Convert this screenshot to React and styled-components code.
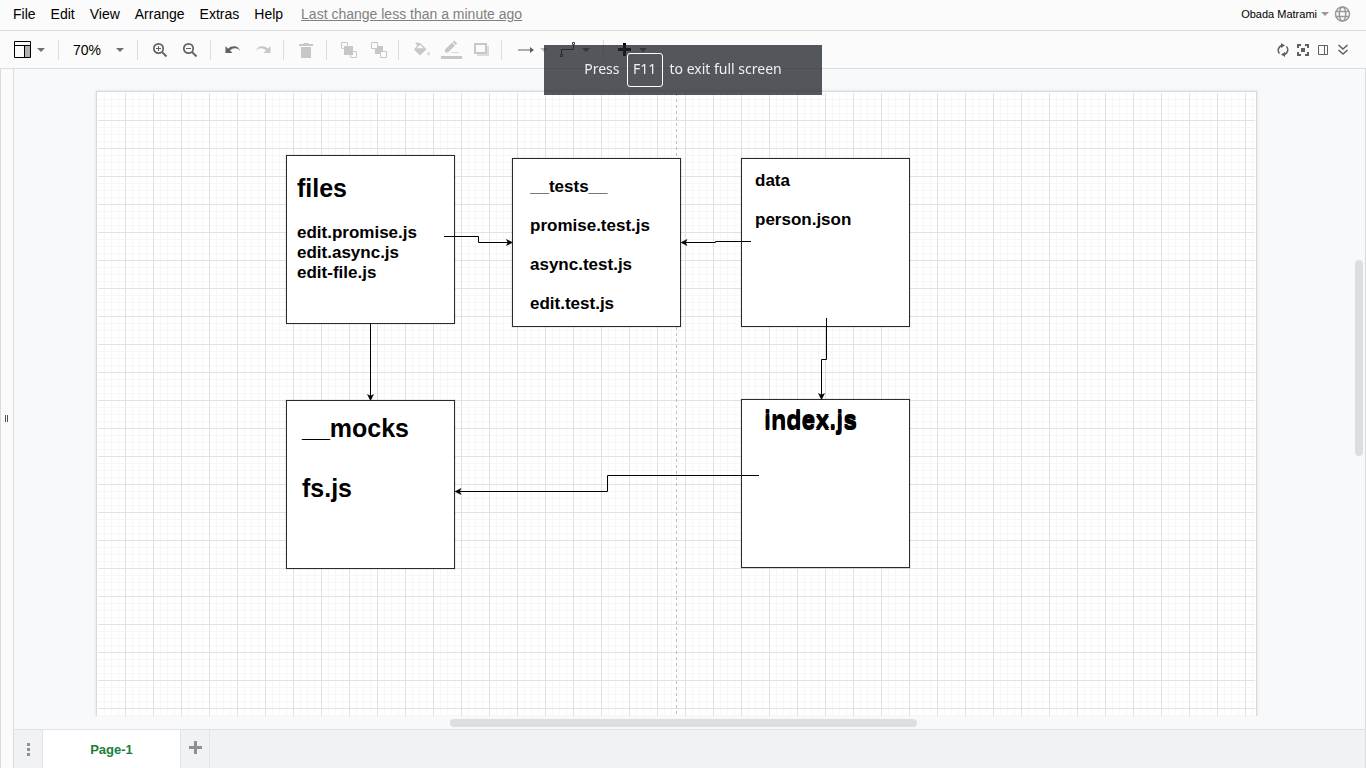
import React from 'react';
import styled, { createGlobalStyle } from 'styled-components';

const Global = createGlobalStyle`
  * { box-sizing: border-box; }
  body { margin: 0; font-family: "Liberation Sans", Arial, sans-serif; font-size: 14px; color: #000; background: #f8f9fb; }
  button { font: inherit; color: inherit; background: none; border: 0; padding: 0; margin: 0; cursor: pointer; }
  svg { display: block; }
`;

const Shell = styled.div`
  min-height: 100vh;
  display: flex;
  flex-direction: column;
`;

const MenuBar = styled.header`
  display: flex;
  align-items: center;
  height: 31px;
  padding: 0 15px 2px 13px;
  background: #fbfbfb;
  border-bottom: 1px solid #dadce0;
`;

const Menus = styled.nav`
  display: flex;
  gap: 15px;
  flex: 1;
  white-space: nowrap;
`;

const MenuButton = styled.button`
  line-height: 18px;
`;

const StatusLink = styled.a`
  color: #808080;
  margin-left: 3px;
  line-height: 18px;
`;

const Account = styled.div`
  display: flex;
  align-items: center;
  gap: 5px;
`;

const UserButton = styled.button`
  display: flex;
  align-items: center;
  gap: 4px;
  font-size: 11px;
  line-height: 18px;
`;

const Toolbar = styled.div`
  display: flex;
  align-items: center;
  height: 38px;
  padding: 0 15px 0 13px;
  background: #fbfbfb;
  border-bottom: 1px solid #dadce0;
`;

const Tool = styled.button`
  display: flex;
  align-items: center;
  justify-content: center;
  gap: ${(p) => p.$gap || 0}px;
  width: ${(p) => p.$w || 30}px;
  height: 24px;
  flex: none;
  color: ${(p) => (p.$dark ? '#000' : '#606060')};
  opacity: ${(p) => (p.$off ? 0.33 : 1)};
`;

const Divider = styled.span`
  width: 1px;
  height: 20px;
  flex: none;
  background: #dadce0;
  margin: 0 ${(p) => p.$r || 14}px 0 ${(p) => p.$l || 14}px;
`;

const Right = styled.div`
  display: flex;
  gap: 4px;
  margin-left: auto;
`;

const Work = styled.div`
  flex: 1;
  display: flex;
`;

const Rail = styled.aside`
  display: flex;
  align-items: center;
  justify-content: center;
  width: 14px;
  flex: none;
  background: #fbfbfb;
  border: solid #dadce0;
  border-width: 0 1px;
`;

const Editor = styled.main`
  flex: 1;
  min-width: 0;
  display: flex;
  flex-direction: column;
  border-right: 1px solid #dadce0;
`;

const View = styled.div`
  flex: 1;
  display: flex;
  padding: 22px 0 0 82px;
  overflow: hidden;
`;

const Paper = styled.section`
  flex: 1;
  min-width: 0;
  display: flex;
  margin-right: 98px;
  padding: 1px 1px 0;
  background: #fff;
  border: 1px solid #d8d9da;
  border-bottom: 0;
  box-shadow: 0 0 2px 1px #e9eaeb;
`;

const Grid = styled.div`
  position: relative;
  flex: 1;
  background-image:
    linear-gradient(#e2e2e2 1px, transparent 1px),
    linear-gradient(90deg, #e2e2e2 1px, transparent 1px),
    linear-gradient(#f7f7f7 1px, transparent 1px),
    linear-gradient(90deg, #f7f7f7 1px, transparent 1px);
  background-size: 28px 28px, 28px 28px, 7px 7px, 7px 7px;
  background-position: 27px 27px, 27px 27px, 6px 6px, 6px 6px;
`;

const Layer = styled.svg`
  position: absolute;
  inset: 0;
  width: 100%;
  height: 100%;
  pointer-events: none;
`;

const Node = styled.article`
  position: absolute;
  left: ${(p) => p.$x}px;
  top: ${(p) => p.$y}px;
  width: 169px;
  height: 169px;
  padding: ${(p) => p.$pad};
  background: #fff;
  border: 1px solid #2b2b2b;
  box-shadow: 0 0 1px rgba(0, 0, 0, 0.4);
  font-weight: bold;
`;

const Title = styled.h2`
  position: relative;
  margin: 0;
  font-size: 25px;
  line-height: 30px;
`;

const Ghost = styled.span`
  position: absolute;
  left: 0;
  top: 2px;
`;

const Lines = styled.div`
  margin-top: ${(p) => p.$mt || 0}px;
  font-size: 17px;
  line-height: ${(p) => p.$lh}px;
`;

const VTrack = styled.div`
  width: 10px;
  flex: none;
  padding: 169px 2px 0 0;
`;

const HTrack = styled.div`
  height: 13px;
  flex: none;
  padding: 3px 0 0 436px;
`;

const Thumb = styled.div`
  width: ${(p) => p.$w}px;
  height: ${(p) => p.$h}px;
  border-radius: 4px;
  background: #dddee0;
`;

const Tabs = styled.footer`
  display: flex;
  height: 39px;
  background: #f1f2f4;
  border-top: 1px solid #dfe1e4;
`;

const TabButton = styled.button`
  display: flex;
  align-items: center;
  justify-content: center;
  width: ${(p) => p.$w}px;
  border-right: 1px solid #e3e5e8;
  background: ${(p) => (p.$active ? '#fff' : 'transparent')};
  color: ${(p) => (p.$active ? '#188038' : '#909090')};
  font-size: 13px;
  font-weight: bold;
`;

const AddButton = styled(TabButton)`
  padding-bottom: 3px;
`;

const Toast = styled.div`
  position: fixed;
  top: 45px;
  left: 50%;
  transform: translateX(-50%);
  display: flex;
  align-items: center;
  justify-content: center;
  gap: 7px;
  width: 278px;
  height: 50px;
  background: rgba(32, 36, 41, 0.77);
  color: #f1f1f1;
  font-family: "Noto Sans", sans-serif;
  font-size: 14px;
  line-height: 18px;
  white-space: nowrap;
`;

const ToastText = styled.span`
  padding-bottom: 2px;
`;

const Key = styled.kbd`
  display: flex;
  align-items: center;
  justify-content: center;
  width: 36px;
  height: 34px;
  padding-bottom: 2px;
  border: 1px solid #fff;
  border-radius: 3px;
  font: inherit;
`;

const Caret = ({ color = '#707070' }) => (
  <svg width="8" height="4" viewBox="0 0 8 4" fill={color}><path d="M0 0h8L4 4z" /></svg>
);

const Svg = ({ w = 24, h = 24, children, ...rest }) => (
  <svg width={w} height={h} viewBox={`0 0 ${w} ${h}`} fill="currentColor" aria-hidden="true" {...rest}>{children}</svg>
);

const Magnifier = ({ plus }) => (
  <Svg w={16} h={16}>
    <circle cx="6.5" cy="6.5" r="4.7" fill="none" stroke="currentColor" strokeWidth="1.7" />
    <path d="M9.5 10.8l1.3-1.3 4.4 4.3-1.4 1.4z" />
    <path d={plus ? 'M4 6h2V4h1v2h2v1H7v2H6V7H4z' : 'M4 6h5v1H4z'} />
  </Svg>
);

const Undo = ({ flip }) => (
  <Svg w={16} h={10} transform={flip ? 'scale(-1 1)' : undefined}>
    <path d="M.5 1v7h7L5 5.600C6.500 4.100 8.200 3.200 10 3.300c2.300.1 4.200 1 5.500 3C14.200 3 12 1.200 9.200 1.200c-2.400 0-4.600.8-6.200 2.500z" />
  </Svg>
);

function App() {
  return (
    <Shell>
      <Global />
      <MenuBar>
        <Menus>
          {['File', 'Edit', 'View', 'Arrange', 'Extras', 'Help'].map((m) => <MenuButton key={m}>{m}</MenuButton>)}
          <StatusLink href="#history">Last change less than a minute ago</StatusLink>
        </Menus>
        <Account>
          <UserButton>Obada Matrami <Caret color="#999" /></UserButton>
          <MenuButton aria-label="Language">
            <Svg w={17} h={16} fill="none" stroke="#999" strokeWidth="1.5">
              <circle cx="8.500" cy="8" r="7" />
              <ellipse cx="8.500" cy="8" rx="3.200" ry="7" />
              <path d="M2 5.500h13M2 10.500h13" />
            </Svg>
          </MenuButton>
        </Account>
      </MenuBar>

      <Toolbar>
        <Tool $w={33} $gap={6} $dark aria-label="View layout">
          <Svg w={17} h={17}>
            <path d="M11 4h5v12h-5z" fill="#b0b0b0" />
            <path d="M.5.5h16v16H.5zM.5 4.500h16M10.500 4.500v12" fill="none" stroke="#000" />
          </Svg>
          <Caret />
        </Tool>
        <Divider $l={12} />
        <Tool $w={51} $gap={15} $dark>70% <Caret /></Tool>
        <Divider $l={13} $r={7} />
        <Tool aria-label="Zoom in"><Magnifier plus /></Tool>
        <Tool aria-label="Zoom out"><Magnifier /></Tool>
        <Divider $l={5} $r={7} />
        <Tool aria-label="Undo"><Undo /></Tool>
        <Tool $off aria-label="Redo"><Undo flip /></Tool>
        <Divider $l={5} $r={7} />
        <Tool $off aria-label="Delete">
          <Svg w={14} h={16}><path d="M0 2h4l1-1h4l1 1h4v2H0zM2 5h10v11H2z" /></Svg>
        </Tool>
        <Divider $l={5} $r={7} />
        <Tool $off aria-label="To front">
          <Svg w={16} h={16}><path d="M3 4h9v9H3z" /><path d="M.5 6V.5H6M10 15.500h5.500V10M12 9.500h3.500M9.500 12v3.500M.5 6.500h2M6.500.5v3" fill="none" stroke="currentColor" /></Svg>
        </Tool>
        <Tool $off aria-label="To back">
          <Svg w={16} h={16}><path d="M4 4h8v8H4z" /><path d="M.5.5h6v6h-6zM9.500 9.500h6v6h-6z" fill="#fff" stroke="currentColor" /></Svg>
        </Tool>
        <Divider $l={4} $r={8} />
        <Tool $off aria-label="Fill color">
          <Svg w={17} h={16}>
            <path d="M2.200.6L1.300 1.500l2 2L0 7.500l6 6 6.500-6.200L6 1zM4.200 4.500L6 2.800l3.500 3.500H2.500z" fillRule="evenodd" />
            <path d="M14.500 9q2 2.500 1.500 3.800-1.500 1.500-3 0-.3-1.300 1.500-3.800z" opacity=".6" />
          </Svg>
        </Tool>
        <Tool $off aria-label="Line color">
          <Svg w={22} h={20}><path d="M4 12.500V9.500l7-7 3 3-7 7zM11.700 1.800L13.200.5l3 3-1.500 1.400zM0 16h21v3H0z" /><path d="M10 12h8v1h-8z" opacity=".6" /></Svg>
        </Tool>
        <Tool $off aria-label="Shadow">
          <Svg w={16} h={14}><path d="M3 13h12V3h-2v8H3z" opacity=".6" /><path d="M1 1h11v9H1z" fill="none" stroke="currentColor" strokeWidth="2" /></Svg>
        </Tool>
        <Divider $l={4} $r={15} />
        <Tool $w={31} $gap={6} aria-label="Connection">
          <Svg w={16} h={6}><path d="M0 2.500h12V0l4 3-4 3V3.500H0z" /></Svg>
          <Caret color="#bbb" />
        </Tool>
        <Tool $w={53} $gap={7} aria-label="Waypoints">
          <Svg w={16} h={16}><path d="M2.500 12V7.500h12V3M1.500 12.500h2v2h-2zM13.500.5h2v2h-2z" fill="none" stroke="#444" /></Svg>
          <Caret />
        </Tool>
        <Divider $l={2} $r={13} />
        <Tool $w={31} $gap={8} $dark aria-label="Insert">
          <Svg w={13} h={13}><path d="M5 0h3v5h5v3H8v5H5V8H0V5h5z" /></Svg>
          <Caret />
        </Tool>
        <Right>
          <Tool $w={16} aria-label="Refresh">
            <Svg w={12} h={14}><path d="M2.500 10.500A5 5 0 0 1 4.500 2.500M9.500 3.500A5 5 0 0 1 7.500 11.500" fill="none" stroke="currentColor" strokeWidth="1.500" /><path d="M4 0l4 2.500L4 5zM8 9v5l-4-2.500z" /></Svg>
          </Tool>
          <Tool $w={16} aria-label="Fullscreen">
            <Svg w={12} h={12}><path d="M0 0h4v2H2v2H0zM8 0h4v4h-2V2H8zM0 8h2v2h2v2H0zM10 8h2v4H8v-2h2zM4 4h4v4H4z" /></Svg>
          </Tool>
          <Tool $w={16} aria-label="Format panel">
            <Svg w={10} h={10}><path d="M.5.5h9v9h-9zM6.500.5v9" fill="none" stroke="currentColor" /></Svg>
          </Tool>
          <Tool $w={16} aria-label="Collapse">
            <Svg w={10} h={12}><path d="M.5 1L5 5 9.500 1M.5 6L5 10 9.500 6" fill="none" stroke="currentColor" strokeWidth="1.500" /></Svg>
          </Tool>
        </Right>
      </Toolbar>

      <Work>
        <Rail><Svg w={4} h={7} fill="#555"><path d="M0 0h1v7H0zM2 0h1v7H2z" /></Svg></Rail>
        <Editor>
          <View>
            <Paper>
              <Grid>
                <Layer><path d="M578.500 0V2000" stroke="#bdbdbd" strokeDasharray="3 3" /></Layer>
                <Node $x={188} $y={62} $pad="17px 0 0 10px">
                  <Title>files</Title>
                  <Lines $mt={20} $lh={20}>edit.promise.js<br />edit.async.js<br />edit-file.js</Lines>
                </Node>
                <Node $x={414} $y={65} $pad="8px 0 0 17px">
                  <Lines $lh={39}>__tests__<br />promise.test.js<br />async.test.js<br />edit.test.js</Lines>
                </Node>
                <Node $x={643} $y={65} $pad="2px 0 0 13px">
                  <Lines $lh={39}>data<br />person.json</Lines>
                </Node>
                <Node $x={188} $y={307} $pad="12px 0 0 15px">
                  <Title>__mocks<br /><br />fs.js</Title>
                </Node>
                <Node $x={643} $y={306} $pad="4px 0 0 22px">
                  <Title>index.js<Ghost aria-hidden="true">index.js</Ghost></Title>
                </Node>
                <Layer>
                  <g fill="none" stroke="#000">
                    <path d="M346 143.500H380.500V149.500H411" />
                    <path d="M653 148.500H617.500V149.500H586" />
                    <path d="M272.500 231V304" />
                    <path d="M728.500 225V266.500H723.500V303" />
                    <path d="M661 382.500H509.500V398.500H360" />
                  </g>
                  <path d="M414.500 149.500l-6-3 1.500 3-1.500 3zM583 149.500l6-3-1.500 3 1.500 3zM272.500 307.500l-3-6 3 1.500 3-1.500zM723.500 306.500l-3-6 3 1.500 3-1.500zM357 398.500l6-3-1.500 3 1.500 3z" stroke="#000" strokeWidth=".5" />
                </Layer>
              </Grid>
            </Paper>
            <VTrack><Thumb $w={8} $h={196} /></VTrack>
          </View>
          <HTrack><Thumb $w={467} $h={8} /></HTrack>
          <Tabs>
            <TabButton $w={29} aria-label="Pages"><Svg w={3} h={13}><path d="M0 0h3v3H0zM0 5h3v3H0zM0 10h3v3H0z" /></Svg></TabButton>
            <TabButton $w={138} $active>Page-1</TabButton>
            <AddButton $w={29} aria-label="Insert page"><Svg w={13} h={13}><path d="M5 0h3v5h5v3H8v5H5V8H0V5h5z" /></Svg></AddButton>
          </Tabs>
        </Editor>
      </Work>

      <Toast role="status">
        <ToastText>Press</ToastText>
        <Key>F11</Key>
        <ToastText>to exit full screen</ToastText>
      </Toast>
    </Shell>
  );
}

export default App;
